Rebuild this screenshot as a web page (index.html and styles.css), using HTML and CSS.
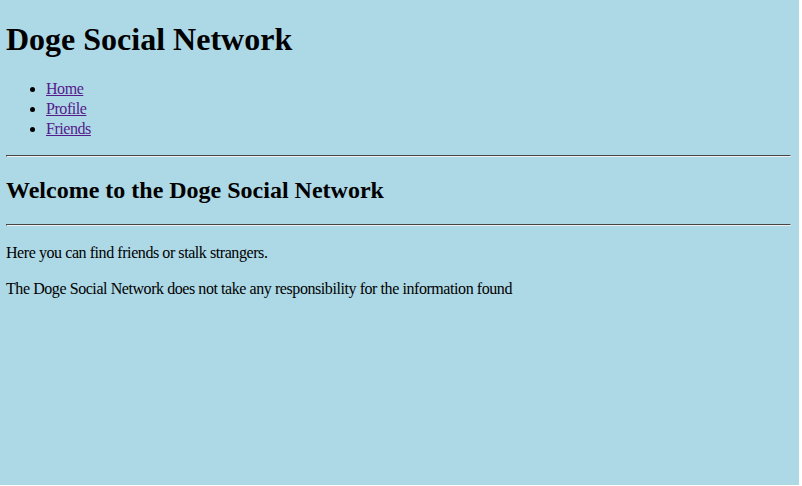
FILE: index.html
```html
<!DOCTYPE html>
<html>
<head>
<meta charset="utf-8">
<title>Doge Social Network</title>
<link rel="stylesheet" href="styles.css">
</head>
<body>
<div class="page">
  <h1 class="title">Doge Social Network</h1>
  <ul class="nav">
    <li><a href="#">Home</a></li>
    <li><a href="#">Profile</a></li>
    <li><a href="#">Friends</a></li>
  </ul>
  <hr class="rule">
  <h2 class="welcome">Welcome to the Doge Social Network</h2>
  <hr class="rule">
  <p class="text text-first">Here you can find friends or stalk strangers.</p>
  <p class="text">The Doge Social Network does not take any responsibility for the information found</p>
</div>
</body>
</html>
```
FILE: styles.css
```css
html {
  background: #ffffff;
}
body {
  margin: 0;
}
.page {
  display: flow-root;
  box-sizing: border-box;
  width: 799px;
  height: 485px;
  padding: 0 8px 0 6px;
  background: #add8e6;
  font-family: "Liberation Serif", "Times New Roman", serif;
  font-size: 16px;
  color: #000;
}
.title {
  font-size: 32px;
  font-weight: bold;
  margin: 21px 0;
}
.nav {
  margin: 16px 0;
  padding-left: 40px;
  letter-spacing: -0.45px;
}
.nav li {
  line-height: 20px;
}
.nav a {
  color: #551a8b;
}
.rule {
  margin: 8px 0;
  border: 1px inset #eee;
  border-color: #9a9a9a #eeeeee #eeeeee #9a9a9a;
}
.welcome {
  font-size: 24px;
  font-weight: bold;
  margin: 20px 0;
}
.text {
  margin: 16px 0;
  line-height: 20px;
  letter-spacing: -0.43px;
}
.text-first {
  margin-top: 17px;
}
```
